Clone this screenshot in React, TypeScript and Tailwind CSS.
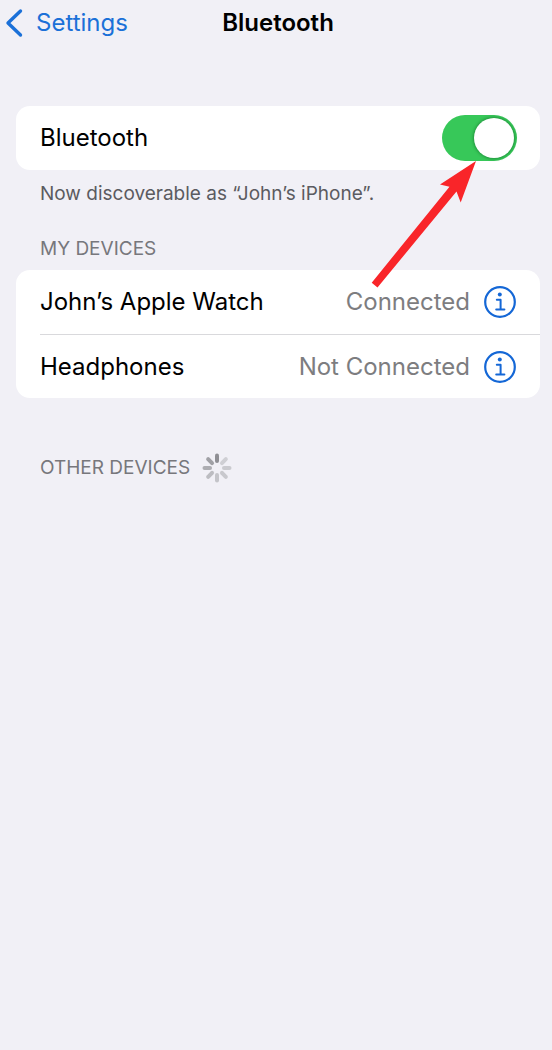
import { useState } from 'react';

type Device = { name: string; status: string };

const DEVICES: Device[] = [
  { name: 'John’s Apple Watch', status: 'Connected' },
  { name: 'Headphones', status: 'Not Connected' },
];

// clockwise from the top
const SPOKES = ['#8f8f94', '#cfcfd4', '#cacacf', '#c8c8cd', '#c4c4c9', '#bcbcc1', '#adadb2', '#a0a0a5'];

function InfoIcon() {
  return (
    <svg viewBox="0 0 32 32" className="h-8 w-8" fill="none" stroke="#1467d6" aria-hidden="true">
      <circle cx="16" cy="16" r="14.8" strokeWidth="2.2" />
      <circle cx="15.8" cy="8.6" r="2" fill="#1467d6" stroke="none" />
      <path d="M12.8 13.8h3.8v9.6M12.2 23.6h8.2" strokeWidth="2" strokeLinecap="round" strokeLinejoin="round" />
    </svg>
  );
}

function Spinner() {
  return (
    <svg viewBox="-15 -15 30 30" className="h-[30px] w-[30px]" role="img" aria-label="Searching">
      {SPOKES.map((color, i) => (
        <line key={i} x1="0" y1="-7" x2="0" y2="-12.5" stroke={color} strokeWidth="4"
          strokeLinecap="round" transform={`rotate(${i * 45})`} />
      ))}
    </svg>
  );
}

function Arrow() {
  return (
    <svg viewBox="0 0 120 140" aria-hidden="true"
      className="pointer-events-none absolute -left-[76px] top-10 h-[140px] w-[120px] max-w-none">
      <path d="M110 6 74 29.500 83.500 31.800 5.700 127.700 11.500 132.500 90.500 36.500 94.700 47.500Z" fill="#f92529" />
    </svg>
  );
}

export default function App() {
  const [enabled, setEnabled] = useState(true);

  return (
    <div className="min-h-screen bg-[#f1f0f6] font-['Inter','Liberation_Sans',sans-serif] text-black">
      <header className="grid h-[45px] grid-cols-[1fr_auto_1fr] items-center pl-1">
        <a href="#settings" className="flex items-center gap-3 text-2xl text-[#1b70d8]">
          <svg viewBox="0 0 20 30" className="h-[30px] w-5" fill="none" stroke="currentColor"
            strokeWidth="3.4" strokeLinecap="round" strokeLinejoin="round" aria-hidden="true">
            <path d="M16.5 3 4 15l12.500 12" />
          </svg>
          Settings
        </a>
        <h1 className="text-2xl font-semibold">Bluetooth</h1>
      </header>

      <main className="pl-4 pr-3 pt-[61px]">
        <section className="flex h-16 items-center justify-between rounded-[14px] bg-white pl-6 pr-[23px]">
          <label htmlFor="bluetooth" className="text-2xl">Bluetooth</label>
          <div className="relative flex">
            <input
              id="bluetooth" type="checkbox" role="switch"
              checked={enabled}
              onChange={(e) => setEnabled(e.target.checked)}
              className="peer h-[46px] w-[75px] appearance-none rounded-full bg-[#e9e9eb] checked:bg-[#37c859]"
            />
            <span className="pointer-events-none absolute left-[3px] top-[3px] h-10 w-10 rounded-full bg-white shadow-[0_0_3px_1px_rgba(0,70,20,0.4)] peer-checked:left-8" />
            <Arrow />
          </div>
        </section>
        <p className="px-6 pt-3 text-[19px] leading-6 text-[#5b5b60]">Now discoverable as “John’s iPhone”.</p>

        <h2 className="px-6 pb-[9px] pt-[31px] text-[19px] leading-6 text-[#77777c]">MY DEVICES</h2>
        <ul className="rounded-[14px] bg-white pl-6">
          {DEVICES.map((device) => (
            <li key={device.name}
              className="flex h-16 items-center gap-[14px] border-t border-[#d9d9dc] pr-6 first:border-t-0">
              <span className="flex-1 text-2xl">{device.name}</span>
              <span className="text-2xl text-[#7d7d80]">{device.status}</span>
              <button type="button" aria-label={`About ${device.name}`}>
                <InfoIcon />
              </button>
            </li>
          ))}
        </ul>

        <div className="flex items-center gap-3 px-6 pt-[55px]">
          <h2 className="text-[19px] leading-6 text-[#77777c]">OTHER DEVICES</h2>
          <Spinner />
        </div>
      </main>
    </div>
  );
}
